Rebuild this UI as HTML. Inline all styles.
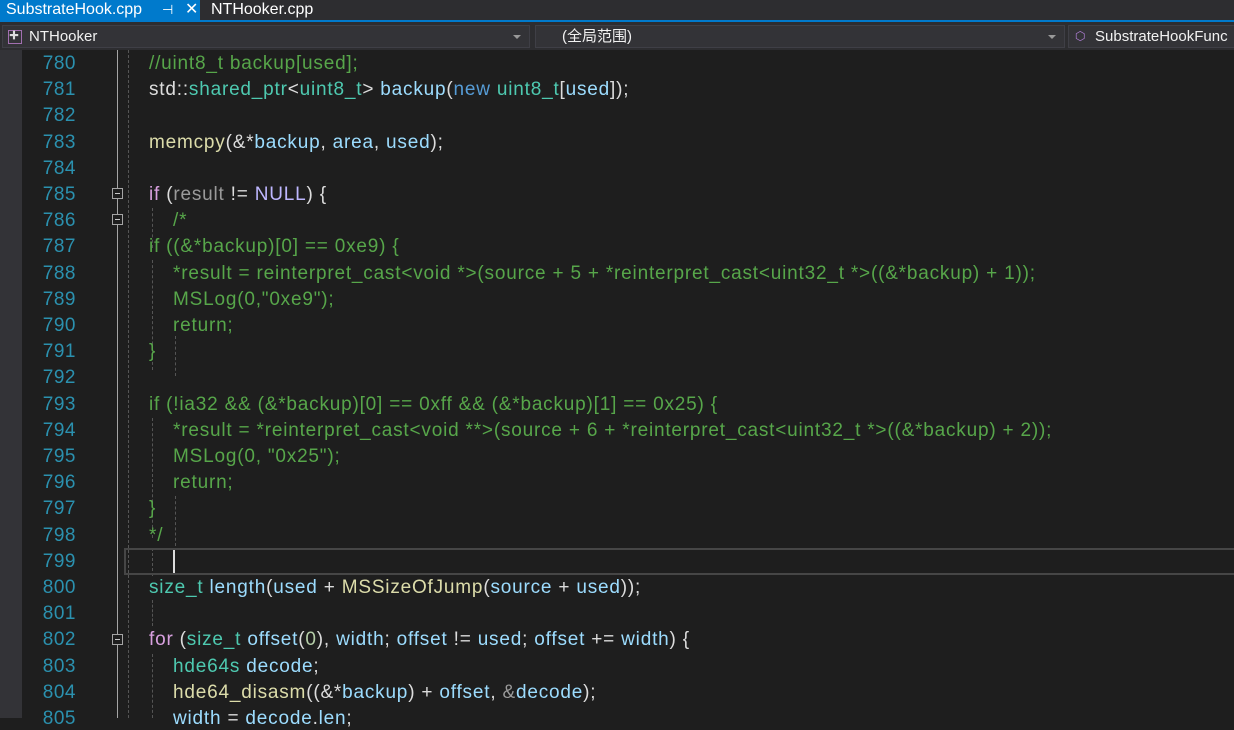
<!DOCTYPE html>
<html><head><meta charset="utf-8"><style>
*{margin:0;padding:0;box-sizing:border-box}
body{width:1234px;height:718px;overflow:hidden;background:#1e1e1e;font-family:"Liberation Sans","Noto Sans CJK SC",sans-serif;position:relative}
.tabs{position:absolute;left:0;top:0;width:1234px;height:22px;background:#2d2d30;border-bottom:2px solid #007acc}
.tab{position:absolute;top:0;height:20px;font-size:16px;line-height:20px;color:#fff}
.nav{position:absolute;left:0;top:22px;width:1234px;height:28px;background:#2d2d30}
.dd{position:absolute;top:3px;height:23px;background:#333337;border:1px solid #3f3f46;color:#f1f1f1;font-size:15px;line-height:21px}
.arr{position:absolute;right:8px;top:9px;width:0;height:0;border-left:4px solid transparent;border-right:4px solid transparent;border-top:4px solid #999}
.strip{position:absolute;left:0;top:50px;width:22px;height:668px;background:#333337}
.ln{position:absolute;left:22px;width:54px;text-align:right;color:#2b91af;font-size:19px;letter-spacing:0.5px}
.code{position:absolute;left:149px;white-space:pre;color:#dcdcdc;font-size:19px;letter-spacing:0.8px}
.c{color:#57a64a}.t{color:#4ec9b0}.v{color:#9cdcfe}.f{color:#dcdcaa}.k{color:#569cd6}.p{color:#d8a0df}.m{color:#beb7ff}.g{color:#9a9a9a}.n{color:#b5cea8}
.vl{position:absolute;left:117px;top:50px;width:1px;height:668px;background:#a5a5a5}
.dg{position:absolute;width:0;border-left:1px dashed #555}
.box{position:absolute;left:112px;width:11px;height:11px;border:1px solid #a5a5a5;background:#1e1e1e}
.box:after{content:"";position:absolute;left:2px;top:4px;width:5px;height:1px;background:#c8c8c8}
</style></head><body>
<div class="tabs">
 <div class="tab" style="left:0;width:200px;background:#007acc;padding-left:6px">SubstrateHook.cpp<span style="position:absolute;left:162px;font-size:13px">⊣</span><span style="position:absolute;left:185px">✕</span></div>
 <div class="tab" style="left:211px">NTHooker.cpp</div>
</div>
<div class="nav">
 <div class="dd" style="left:2px;width:528px;padding-left:26px"><span style="position:absolute;left:5px;top:4px;width:14px;height:14px;border:1px solid #a26fb0;font-size:10px;line-height:11px;color:#ddd">✚</span>NTHooker<div class="arr"></div></div>
 <div class="dd" style="left:535px;width:530px;padding-left:26px">(全局范围)<div class="arr"></div></div>
 <div class="dd" style="left:1068px;width:170px;padding-left:26px"><span style="position:absolute;left:6px;top:0;color:#b180d7;font-size:12px">⬡</span>SubstrateHookFunc</div>
</div>
<div class="strip"></div>
<div class="vl"></div>
<div class="dg" style="left:128px;top:50px;height:668px"></div>
<div class="dg" style="left:152px;top:208px;height:40px"></div>
<div class="dg" style="left:152px;top:260px;height:110px"></div>
<div class="dg" style="left:175px;top:336px;height:40px"></div>
<div class="dg" style="left:152px;top:418px;height:120px"></div>
<div class="dg" style="left:175px;top:496px;height:50px"></div>
<div class="dg" style="left:152px;top:548px;height:28px"></div>
<div class="dg" style="left:152px;top:600px;height:26px"></div>
<div class="dg" style="left:152px;top:654px;height:64px"></div>
<div style="position:absolute;left:124px;top:548px;width:1120px;height:27px;border:2px solid #464646"></div>
<div style="position:absolute;left:173px;top:550px;width:2px;height:23px;background:#dcdcdc"></div>
<div class="box" style="top:188px"></div>
<div class="box" style="top:214px"></div>
<div class="box" style="top:634px"></div>
<div id="L"></div>
<script>
var lines=[
'<span class="c">//uint8_t backup[used];</span>',
'std::<span class="t">shared_ptr</span>&lt;<span class="t">uint8_t</span>&gt; <span class="v">backup</span>(<span class="k">new</span> <span class="t">uint8_t</span>[<span class="v">used</span>]);',
'',
'<span class="f">memcpy</span>(&amp;*<span class="v">backup</span>, <span class="v">area</span>, <span class="v">used</span>);',
'',
'<span class="p">if</span> (<span class="g">result</span> != <span class="m">NULL</span>) {',
'<span class="c">    /*</span>',
'<span class="c">if ((&amp;*backup)[0] == 0xe9) {</span>',
'<span class="c">    *result = reinterpret_cast&lt;void *&gt;(source + 5 + *reinterpret_cast&lt;uint32_t *&gt;((&amp;*backup) + 1));</span>',
'<span class="c">    MSLog(0,"0xe9");</span>',
'<span class="c">    return;</span>',
'<span class="c">}</span>',
'',
'<span class="c">if (!ia32 &amp;&amp; (&amp;*backup)[0] == 0xff &amp;&amp; (&amp;*backup)[1] == 0x25) {</span>',
'<span class="c">    *result = *reinterpret_cast&lt;void **&gt;(source + 6 + *reinterpret_cast&lt;uint32_t *&gt;((&amp;*backup) + 2));</span>',
'<span class="c">    MSLog(0, "0x25");</span>',
'<span class="c">    return;</span>',
'<span class="c">}</span>',
'<span class="c">*/</span>',
'',
'<span class="t">size_t</span> <span class="v">length</span>(<span class="v">used</span> + <span class="f">MSSizeOfJump</span>(<span class="v">source</span> + <span class="v">used</span>));',
'',
'<span class="p">for</span> (<span class="t">size_t</span> <span class="v">offset</span>(<span class="n">0</span>), <span class="v">width</span>; <span class="v">offset</span> != <span class="v">used</span>; <span class="v">offset</span> += <span class="v">width</span>) {',
'    <span class="t">hde64s</span> <span class="v">decode</span>;',
'    <span class="f">hde64_disasm</span>((&amp;*<span class="v">backup</span>) + <span class="v">offset</span>, <span class="g">&amp;</span><span class="v">decode</span>);',
'    <span class="v">width</span> = <span class="v">decode</span>.<span class="v">len</span>;'
];
var h='';
for(var i=0;i<lines.length;i++){var y=50+i*26.2;
h+='<div class="ln" style="top:'+(y+3)+'px">'+(780+i)+'</div><div class="code" style="top:'+(y+3)+'px">'+lines[i].replace(/^ {4}/,'<span style="display:inline-block;width:24px"></span>').replace(/">    /,'"><span style="display:inline-block;width:24px"></span>')+'</div>';}
document.getElementById('L').innerHTML=h;
</script>
</body></html>
